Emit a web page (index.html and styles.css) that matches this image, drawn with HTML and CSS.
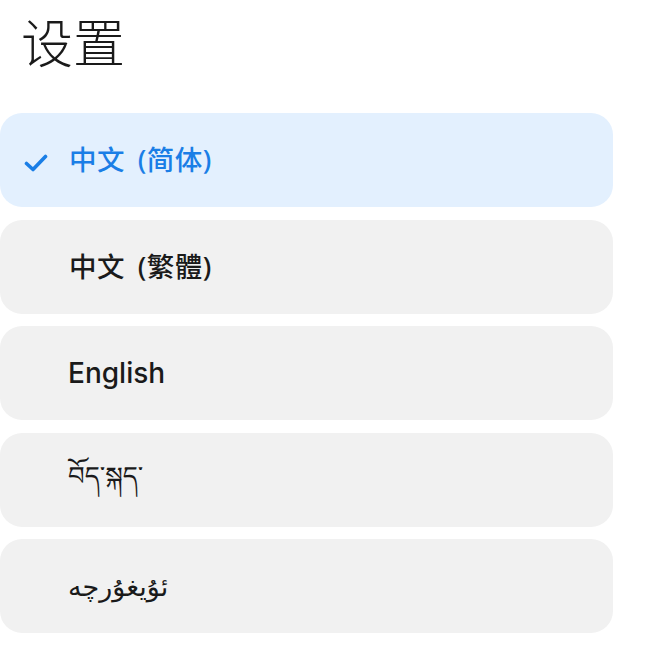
FILE: index.html
```html
<!DOCTYPE html>
<html lang="zh">
<head>
<meta charset="utf-8">
<title>设置</title>
<link rel="stylesheet" href="styles.css">
</head>
<body>
<main class="page">
  <h1 class="title">设置</h1>
  <ul class="lang-list">
    <li class="lang-item selected">
      <svg class="check" viewBox="0 0 24 20" width="24" height="20" aria-hidden="true">
        <path d="M2.5 10.5 L9 16.5 L21.5 3.5" fill="none" stroke="currentColor" stroke-width="3.6" stroke-linecap="round" stroke-linejoin="round"/>
      </svg>
      <span class="label cjk">中文 (简体)</span>
    </li>
    <li class="lang-item">
      <span class="label cjk">中文 (繁體)</span>
    </li>
    <li class="lang-item">
      <span class="label latin">English</span>
    </li>
    <li class="lang-item">
      <span class="label tibetan">བོད་སྐད་</span>
    </li>
    <li class="lang-item">
      <span class="label uyghur" dir="rtl">ئۇيغۇرچە</span>
    </li>
  </ul>
</main>
</body>
</html>
```
FILE: styles.css
```css
html, body {
  margin: 0;
  padding: 0;
  background: #ffffff;
}

.page {
  font-family: "Noto Sans", "Noto Sans CJK SC", sans-serif;
  color: #1a1a1a;
}

.title {
  margin: 0;
  padding: 12px 0 0 21px;
  height: 58px;
  font-family: "Noto Sans CJK SC", sans-serif;
  font-weight: 300;
  font-size: 52px;
  line-height: 58px;
  color: #1a1a1a;
}

.lang-list {
  list-style: none;
  margin: 43px 0 0 0;
  padding: 0;
  width: 613px;
  display: flex;
  flex-direction: column;
  gap: 12.5px;
}

.lang-item {
  position: relative;
  height: 94px;
  border-radius: 22px;
  background: #f1f1f1;
  display: flex;
  align-items: center;
  padding-left: 68px;
}

.lang-item.selected {
  background: #e3f0fe;
  color: #1a7ee6;
}

.check {
  position: absolute;
  left: 24px;
  top: 51px;
  width: 24px;
  height: 20px;
  margin-top: -11px;
  color: #1a7ee6;
}

.label {
  font-size: 27px;
  font-weight: 500;
  line-height: 1;
}

.cjk {
  font-family: "Noto Sans", "Noto Sans CJK SC", sans-serif;
  font-weight: 500;
  font-size: 27.5px;
  padding-left: 1px;
  letter-spacing: 0.5px;
  word-spacing: 5px;
}

.latin {
  font-family: "Inter", "Noto Sans", sans-serif;
  font-size: 28px;
  font-weight: 500;
}

.tibetan {
  font-family: "Noto Sans Tibetan", "Noto Serif Tibetan", "DejaVu Sans", sans-serif;
  font-size: 26px;
  font-weight: 400;
  padding-top: 8px;
}

.uyghur {
  font-family: "DejaVu Sans", "Noto Sans Arabic", sans-serif;
  font-size: 27px;
  font-weight: 400;
}
```
